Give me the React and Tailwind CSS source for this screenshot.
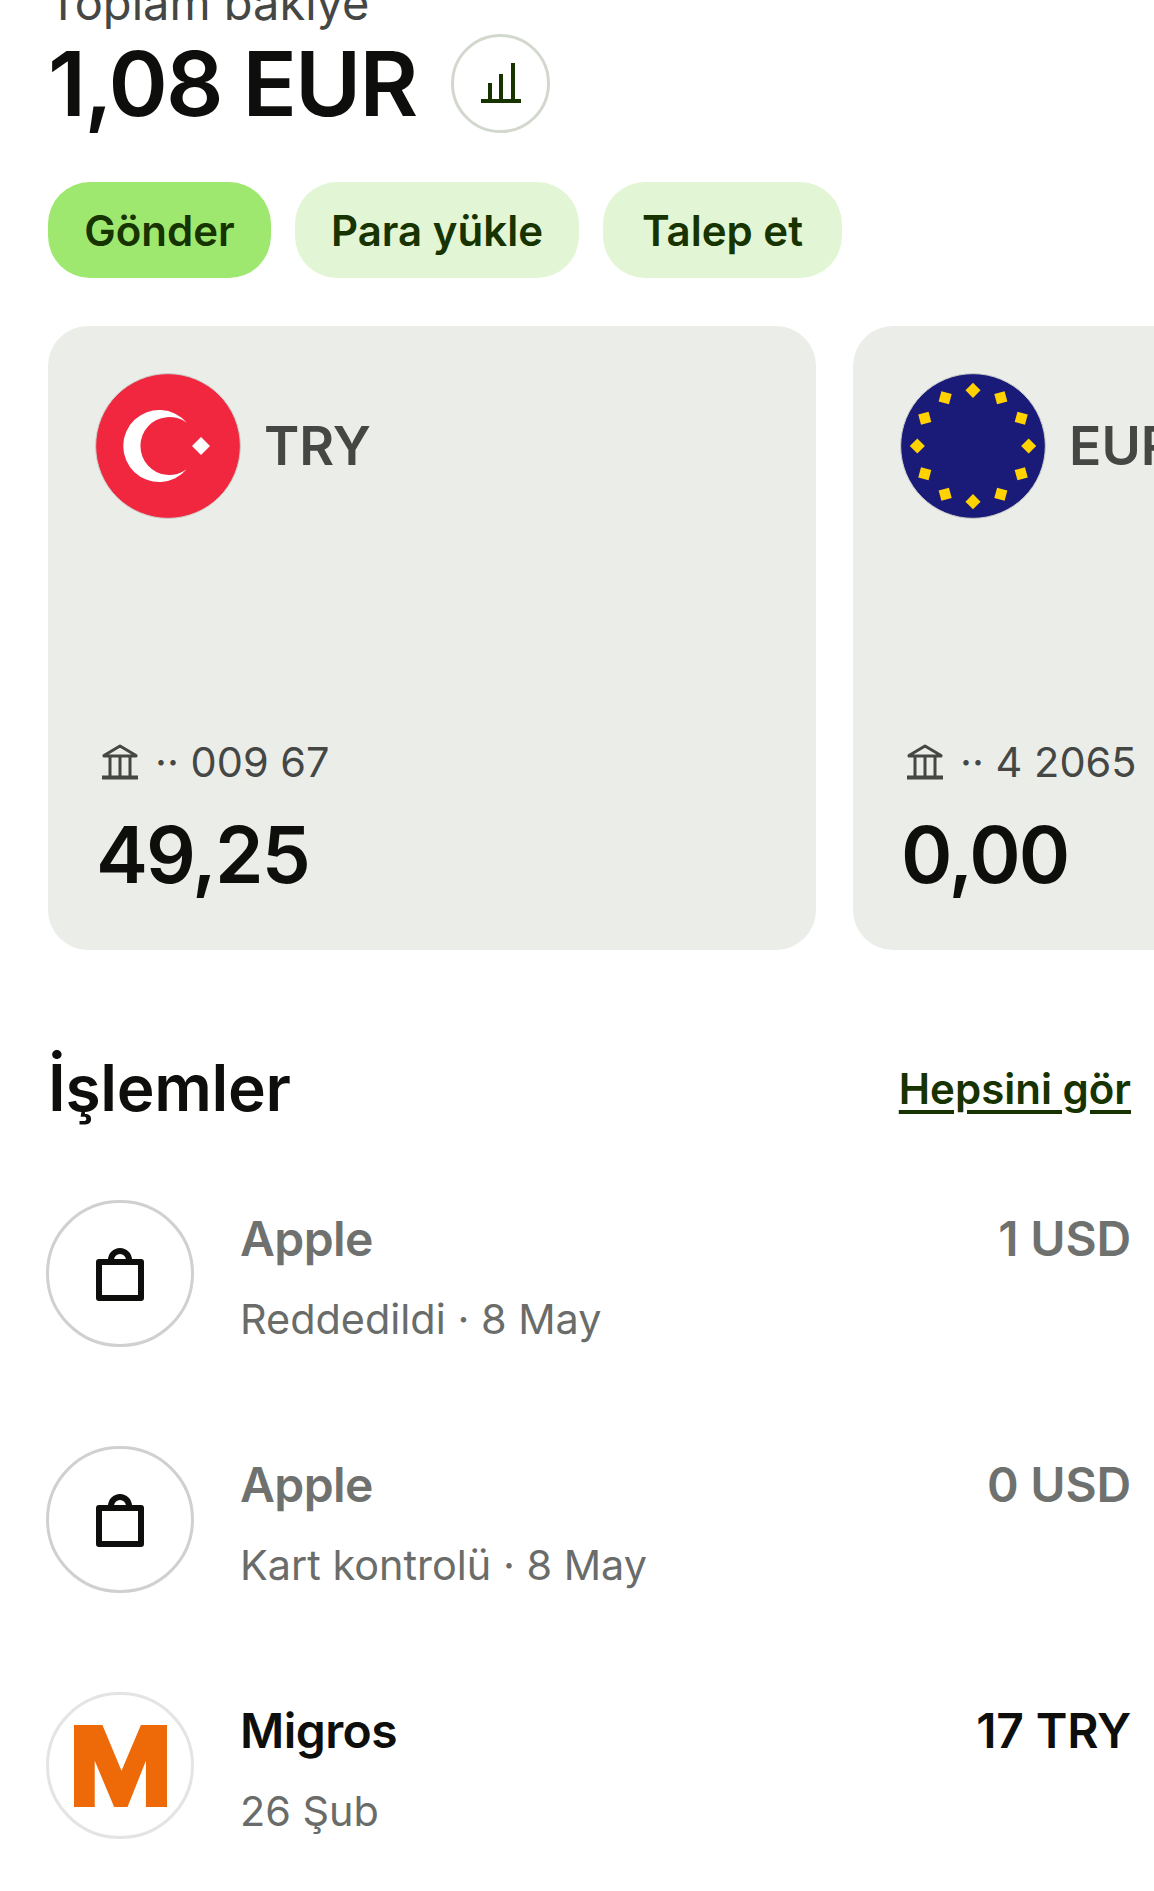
const transactions = [
  { name: 'Apple', sub: 'Reddedildi · 8 May', amount: '1 USD', muted: true, icon: 'bag' },
  { name: 'Apple', sub: 'Kart kontrolü · 8 May', amount: '0 USD', muted: true, icon: 'bag' },
  { name: 'Migros', sub: '26 Şub', amount: '17 TRY', muted: false, icon: 'migros' },
]

const stars = [0, 30, 60, 90, 120, 150, 180, 210, 240, 270, 300, 330]

function TurkeyFlag() {
  return (
    <svg className="w-[146px] h-[146px] -m-[1px] shrink-0" viewBox="-3 -3 438 438">
      <circle cx="216" cy="216" r="217" fill="#f12740" stroke="#c9ccc6" strokeWidth="3" />
      <path d="M272 146A108 108 0 1 0 272 286A87 87 0 1 1 272 146Z" fill="#fff" />
      <path d="M315 189L342 216L315 243L288 216Z" fill="#fff" />
    </svg>
  )
}

function EuFlag() {
  return (
    <svg className="w-[146px] h-[146px] -m-[1px] shrink-0" viewBox="-3 -3 438 438">
      <circle cx="216" cy="216" r="217" fill="#1a1a78" stroke="#c9ccc6" strokeWidth="3" />
      {stars.map((a) => (
        <rect
          key={a}
          x="200"
          y="33"
          width="32"
          height="32"
          fill="#ffd200"
          transform={`rotate(${a} 216 216) rotate(45 216 49)`}
        />
      ))}
    </svg>
  )
}

function BankIcon() {
  return (
    <svg className="w-[38px] h-[38px] shrink-0" viewBox="0 0 38 38" fill="none" stroke="#454745" strokeWidth="3">
      <path d="M3 12.5L19 3L35 12.5V13H3Z" strokeLinejoin="round" />
      <path d="M9 14V33M19 14V33M29 14V33" strokeWidth="3" />
      <path d="M1 34.5H37" strokeWidth="4" />
    </svg>
  )
}

function ChartIcon() {
  return (
    <svg className="w-[42px] h-[42px]" viewBox="0 0 42 42" fill="#163300">
      <rect x="1" y="36" width="40" height="4" />
      <rect x="8" y="20" width="4" height="17" />
      <rect x="19" y="11" width="4" height="26" />
      <rect x="31" y="0" width="4" height="37" />
    </svg>
  )
}

function BagIcon() {
  return (
    <svg className="w-[48px] h-[54px]" viewBox="0 0 48 54" fill="none" stroke="#0e0f0c" strokeWidth="6" strokeLinejoin="round">
      <path d="M3 15H45V51H3Z" />
      <path d="M15 15V13A9 9 0 0 1 33 13V15" />
    </svg>
  )
}

function MigrosLogo() {
  return (
    <svg className="w-[93px] h-[82px]" viewBox="130 165 278 245">
      <path
        d="M130 165H215L272 302L330 165H408V410H345V272L290 410H250L192 272V410H130Z"
        fill="#ee6a09"
      />
    </svg>
  )
}

function Card({ flag, code, account, balance }) {
  return (
    <div className="w-[768px] h-[624px] shrink-0 rounded-[40px] bg-[#ebede9] pt-[48px] px-[48px] flex flex-col">
      <div className="flex items-center gap-[24px]">
        {flag}
        <span className="text-[53.5px] font-semibold text-[#454745]">{code}</span>
      </div>
      <div className="mt-[220px] flex items-center gap-[16px] pl-[5px] text-[41.5px] leading-[48px] text-[#454745]">
        <BankIcon />
        <span>·· {account}</span>
      </div>
      <div className="mt-[25px] text-[78px] leading-[88px] font-semibold tracking-[-0.024em] text-[#0e0f0c]">{balance}</div>
    </div>
  )
}

export default function App() {
  return (
    <div className="h-[1891px] overflow-hidden bg-white font-['Inter',sans-serif]">
      <div className="pl-[48px]">
        <div className="-mt-[22px] text-[47px] leading-[50px] text-[#454745]">Toplam bakiye</div>
        <div className="mt-[6px] flex items-center gap-[35px]">
          <span className="text-[90px] leading-[99px] font-semibold tracking-[-0.021em] text-[#0e0f0c]">1,08 EUR</span>
          <div className="w-[99px] h-[99px] rounded-full border-[3px] border-[#d3d8cf] flex items-center justify-center">
            <ChartIcon />
          </div>
        </div>

        <div className="mt-[49px] flex gap-[24px] text-[42px] font-semibold text-[#163300]">
          <div className="h-[96px] w-[223px] rounded-[42px] bg-[#9fe870] flex items-center justify-center">Gönder</div>
          <div className="h-[96px] w-[284px] rounded-[42px] bg-[#e2f6d5] flex items-center justify-center">Para yükle</div>
          <div className="h-[96px] w-[239px] rounded-[42px] bg-[#e2f6d5] flex items-center justify-center">Talep et</div>
        </div>

        <div className="mt-[48px] flex gap-[37px] overflow-hidden">
          <Card flag={<TurkeyFlag />} code="TRY" account="009 67" balance="49,25" />
          <Card flag={<EuFlag />} code="EUR" account="4 2065" balance="0,00" />
        </div>
      </div>

      <div className="mt-[94px] pl-[48px] pr-[23px] flex items-center justify-between">
        <h2 className="text-[64px] leading-[88px] font-semibold tracking-[-0.005em] text-[#0e0f0c]">İşlemler</h2>
        <a className="text-[42px] font-semibold text-[#163300] underline underline-offset-[6px]">Hepsini gör</a>
      </div>

      <div className="mt-[68px] pl-[46px] pr-[23px] flex flex-col gap-[99px]">
        {transactions.map((t, i) => (
          <div key={i} className="flex gap-[46px] h-[147px]">
            <div
              className={`w-[148px] h-[147px] shrink-0 rounded-full border-[3px] flex items-center justify-center ${
                t.icon === 'bag' ? 'border-[#d0d0d0]' : 'border-[#e4e4e4]'
              }`}
            >
              {t.icon === 'bag' ? <BagIcon /> : <MigrosLogo />}
            </div>
            <div className="flex-1 pt-[9px]">
              <div
                className={`flex justify-between text-[48px] leading-[60px] font-semibold ${
                  t.muted ? 'text-[#6f716f]' : 'text-[#0e0f0c]'
                }`}
              >
                <span className="tracking-[-0.012em]">{t.name}</span>
                <span className="tracking-[-0.004em]">{t.amount}</span>
              </div>
              <div className="mt-[25px] text-[41.4px] leading-[50px] text-[#6a6c6a]">{t.sub}</div>
            </div>
          </div>
        ))}
      </div>
    </div>
  )
}
